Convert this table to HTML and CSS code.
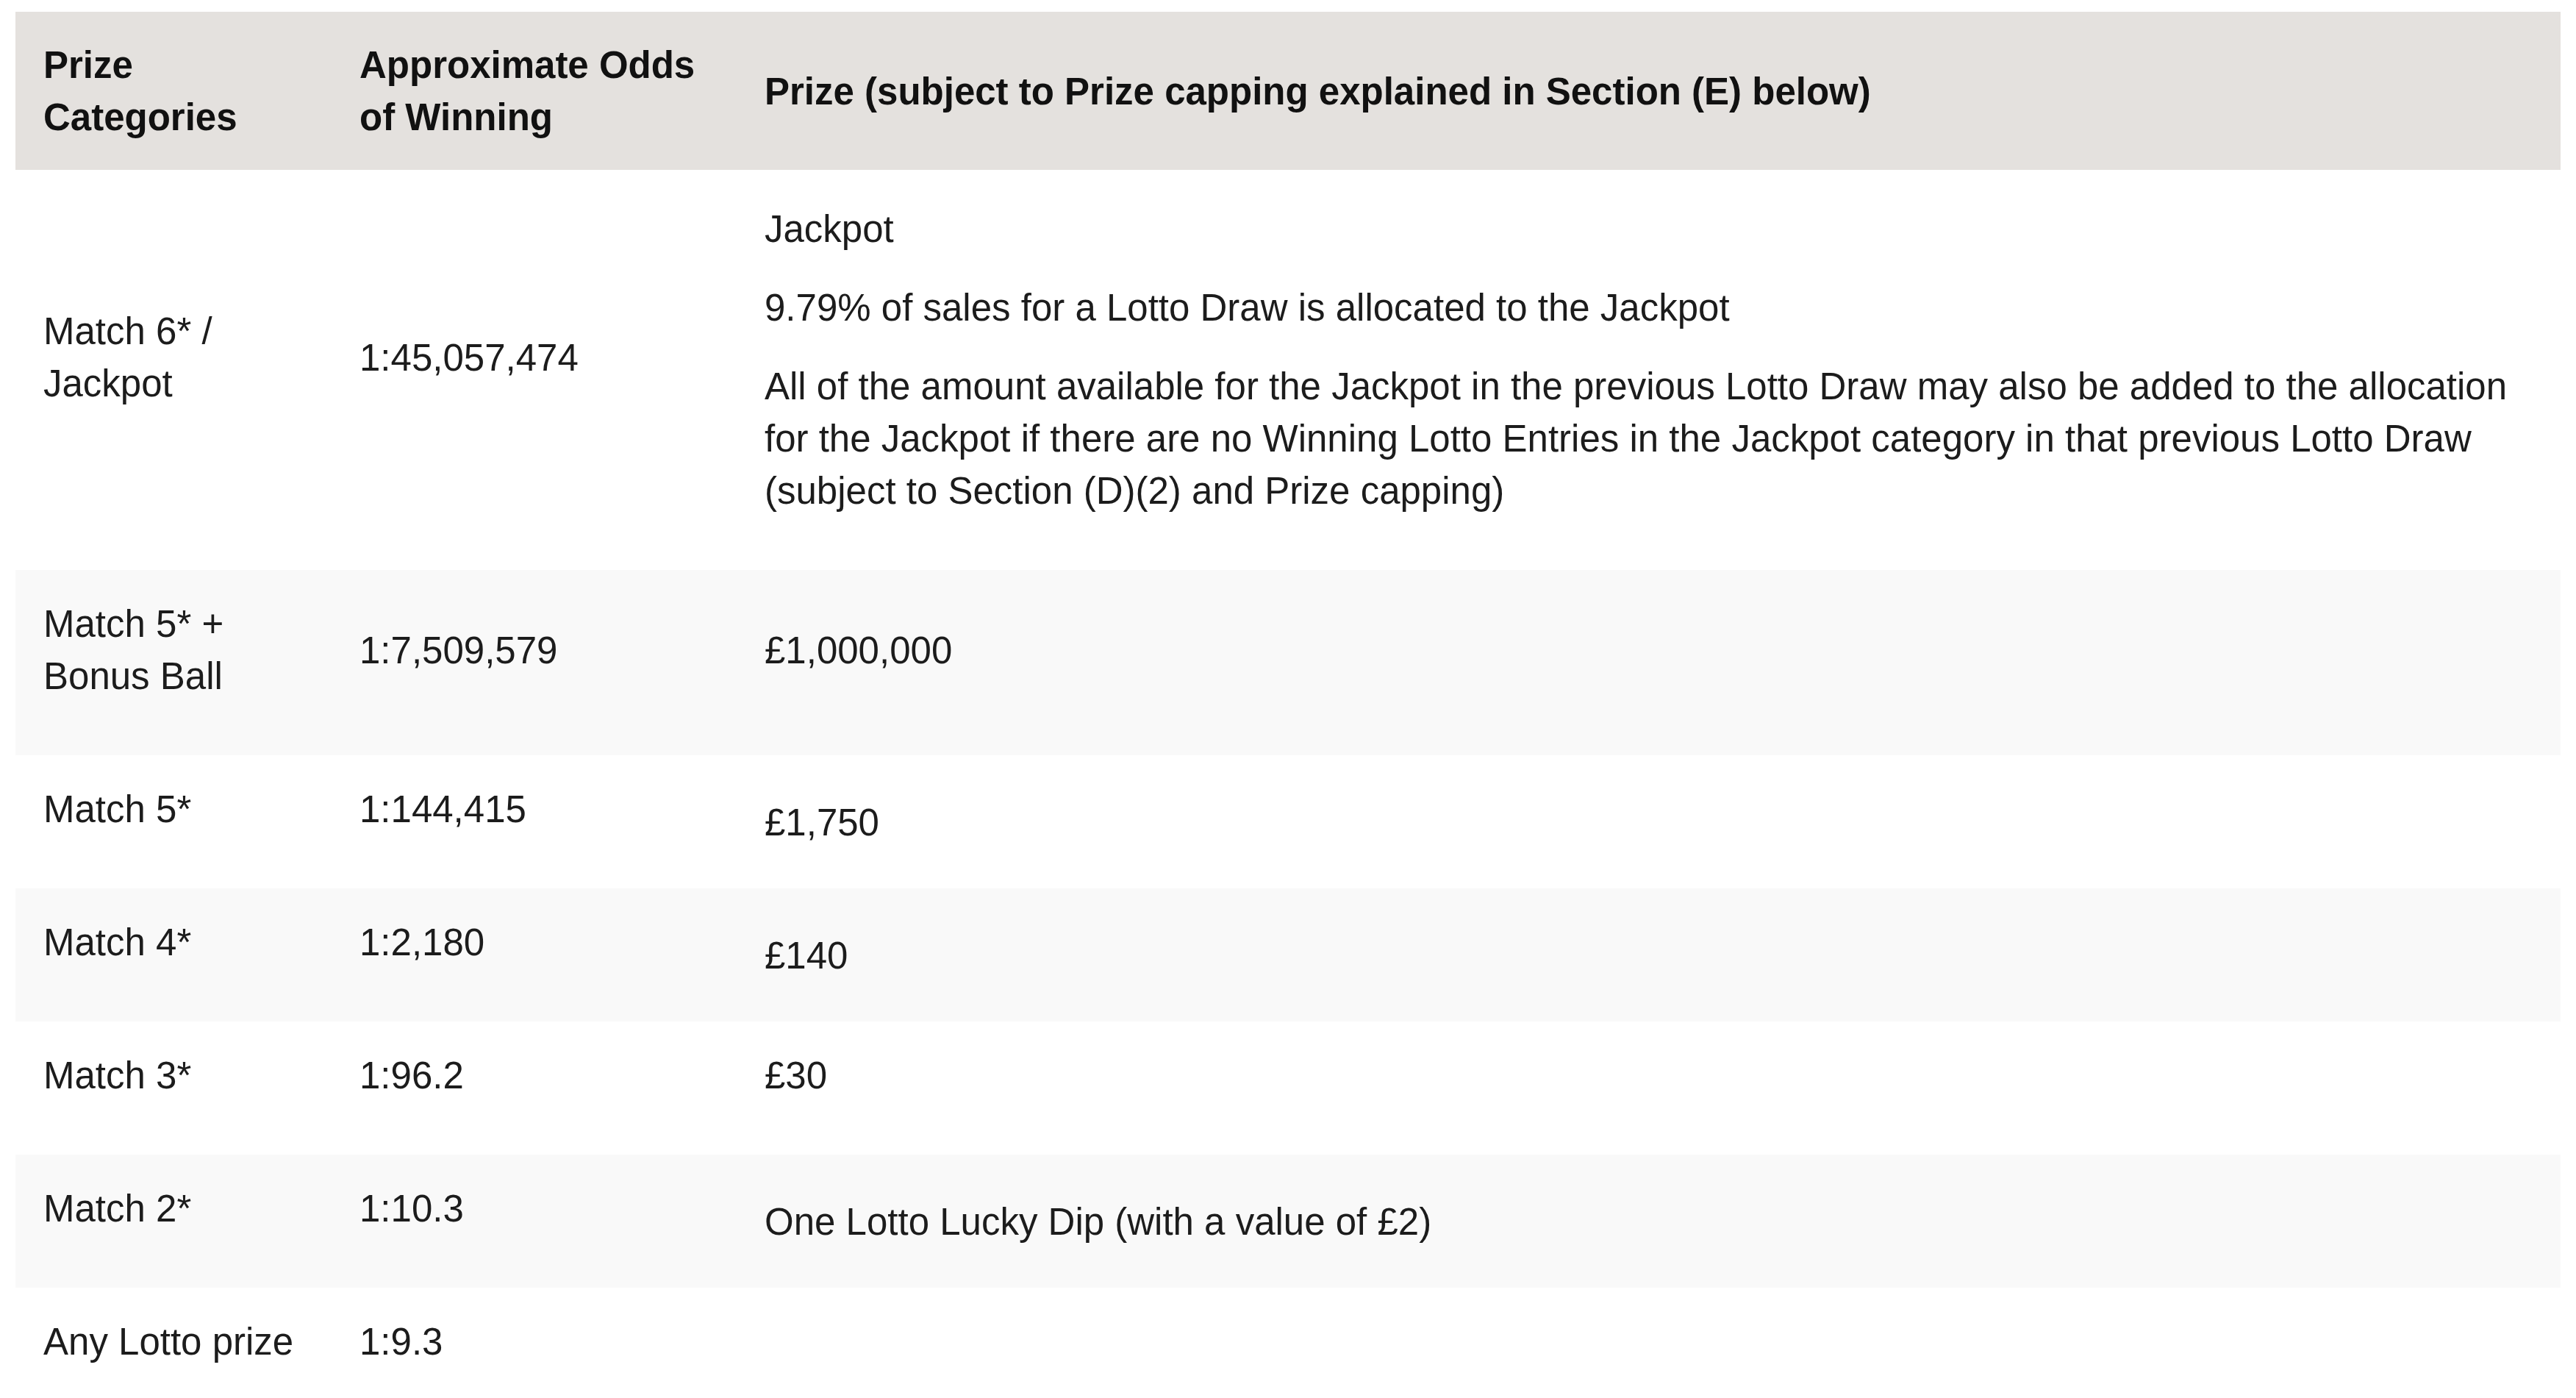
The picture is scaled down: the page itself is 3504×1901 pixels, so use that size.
FILE: index.html
```html
<!DOCTYPE html>
<html lang="en">
<head>
<meta charset="utf-8">
<title>Lotto prize categories</title>
<link rel="stylesheet" href="styles.css">
</head>
<body>
<div class="page">
  <table class="prizes">
    <colgroup>
      <col class="c-cat">
      <col class="c-odds">
      <col class="c-prize">
    </colgroup>
    <thead>
      <tr>
        <th>Prize<br>Categories</th>
        <th>Approximate Odds<br>of Winning</th>
        <th>Prize (subject to Prize capping explained in Section (E) below)</th>
      </tr>
    </thead>
    <tbody>
      <tr>
        <td><p>Match 6* /<br>Jackpot</p></td>
        <td><p>1:45,057,474</p></td>
        <td class="detail">
          <p>Jackpot</p>
          <p>9.79% of sales for a Lotto Draw is allocated to the Jackpot</p>
          <p>All of the amount available for the Jackpot in the previous Lotto Draw may also be added to the allocation for the Jackpot if there are no Winning Lotto Entries in the Jackpot category in that previous Lotto Draw (subject to Section (D)(2) and Prize capping)</p>
        </td>
      </tr>
      <tr class="alt">
        <td><p>Match 5* +<br>Bonus Ball</p></td>
        <td><p>1:7,509,579</p></td>
        <td><p>£1,000,000</p></td>
      </tr>
      <tr>
        <td><p>Match 5*</p></td>
        <td><p>1:144,415</p></td>
        <td>£1,750</td>
      </tr>
      <tr class="alt">
        <td><p>Match 4*</p></td>
        <td><p>1:2,180</p></td>
        <td>£140</td>
      </tr>
      <tr>
        <td><p>Match 3*</p></td>
        <td><p>1:96.2</p></td>
        <td><p>£30</p></td>
      </tr>
      <tr class="alt">
        <td><p>Match 2*</p></td>
        <td><p>1:10.3</p></td>
        <td>One Lotto Lucky Dip (with a value of £2)</td>
      </tr>
      <tr>
        <td><p>Any Lotto prize</p></td>
        <td><p>1:9.3</p></td>
        <td></td>
      </tr>
    </tbody>
  </table>
</div>
</body>
</html>
```

FILE: styles.css
```css
html, body {
  margin: 0;
  padding: 0;
  background: #ffffff;
}

.page {
  padding: 16px 21px 0 21px;
  font-family: "Liberation Sans", Arial, sans-serif;
  font-size: 51px;
  line-height: 71px;
  color: #1c1c1c;
}

.prizes {
  width: 100%;
  border-collapse: collapse;
  table-layout: fixed;
}

.c-cat { width: 430px; }
.c-odds { width: 551px; }

.prizes th {
  background: #e4e1de;
  color: #111111;
  font-weight: bold;
  text-align: left;
  vertical-align: middle;
  padding: 37px 38px 36px 38px;
}

.prizes td {
  text-align: left;
  vertical-align: middle;
  padding: 38px 38px 36px 38px;
}

.prizes td.detail {
  padding-top: 45px;
}

.prizes td p {
  margin: 0 0 36px 0;
}

.prizes tr.alt td {
  background: #f9f9f9;
}
```
